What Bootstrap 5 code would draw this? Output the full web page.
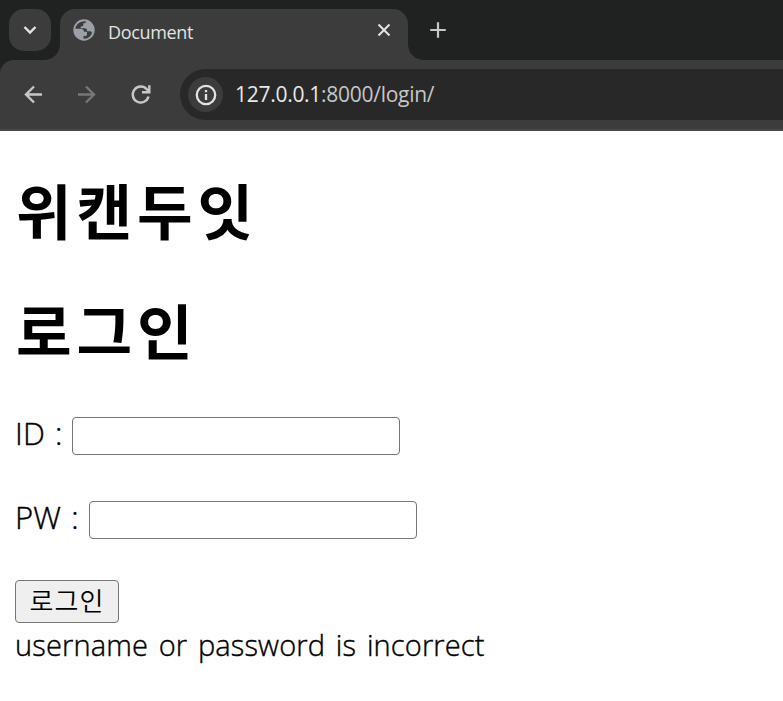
<!DOCTYPE html>
<html lang="ko">
<head>
<meta charset="utf-8">
<meta name="viewport" content="width=device-width, initial-scale=1">
<title>Document</title>
<link href="https://cdn.jsdelivr.net/npm/bootstrap@5.3.0/dist/css/bootstrap.min.css" rel="stylesheet">
<style>
body{font-family:"Open Sans","Noto Sans CJK KR",sans-serif;color:#000;background:#fff;overflow:hidden}
svg{display:block;flex:none}
.tab-strip{height:60px;background:#202221;padding:9px 0 0 9px}
.tab-search{width:42px;height:42px;border-radius:15px;background:#3c3c3c}
.active-tab{width:348px;height:51px;margin-left:9px;background:#3c3c3c;border-radius:15px 15px 0 0;padding:0 17px 9px 13px;color:#e3e3e3}
.active-tab::before,.active-tab::after{content:"";position:absolute;bottom:0;width:15px;height:15px}
.active-tab::before{left:-15px;background:radial-gradient(circle at 0 0,transparent 14.5px,#3c3c3c 15px)}
.active-tab::after{right:-15px;background:radial-gradient(circle at 100% 0,transparent 14.5px,#3c3c3c 15px)}
.tab-title{font-size:18px;line-height:24px;margin:3px 0 0 13px;letter-spacing:-.35px}
.new-tab{margin:8px 0 0 22px}
.toolbar-wrap{background:#202221}
.toolbar{height:71px;background:#3c3c3c;border-radius:14px 0 0 0;border-bottom:2px solid #484848;padding:9px 0 9px 19px}
.nav-icons{gap:26px}
.address{height:51px;background:#282828;border-radius:26px 0 0 26px;padding-left:8px;margin-left:25px}
.site-info{width:35px;height:35px;background:#3c3c3c}
.url{font-size:21px;color:#c7c7c7;margin:0 0 1px 12px;line-height:30px;letter-spacing:-.28px}
.url span{color:#e8e8e8}
.page{padding:41px 15px 0}
.page h1{font-size:60.5px;line-height:80px;font-weight:700;letter-spacing:4.8px;margin:0 0 40px 1px}
.field{font-size:31px;line-height:40px;height:38px;font-weight:300;-webkit-text-stroke:.4px #000}
.field label{margin-top:-6px;word-spacing:2px;letter-spacing:.1px}
.field input{width:328px;height:38px;border:1px solid #767676;border-radius:4px;background:#fff;margin-left:9px}
.pw-row input{margin-left:10px}
.id-row{margin-top:45px}
.pw-row{margin-top:46px}
.login-btn{width:104px;height:43px;border:1px solid #767676;border-radius:4px;background:#efefef;font-size:26px;line-height:41px;color:#000;margin-top:41px;letter-spacing:1px;font-weight:350}
.message{font-size:29px;line-height:40px;margin-top:2px;font-weight:300;word-spacing:3px;letter-spacing:.14px;-webkit-text-stroke:.4px #000}
</style>
<script src="https://cdn.jsdelivr.net/npm/bootstrap@5.3.0/dist/js/bootstrap.bundle.min.js"></script>
</head>
<body>
<header>
<div class="tab-strip d-flex">
<div class="tab-search d-flex align-items-center justify-content-center"><svg width="14" height="10" viewBox="0 0 14 10" fill="none" stroke="#e3e3e3" stroke-width="2.4"><path d="M1.5 2 7 7.5 12.5 2"/></svg></div>
<div class="active-tab d-flex align-items-center position-relative">
<svg width="22" height="22" viewBox="0 0 22 22"><circle cx="11" cy="11" r="9.700" fill="none" stroke="#9aa0a6" stroke-width="2"/><path fill="#9aa0a6" d="M1.500 9.700H7.500C9.500 9.700 11 10.800 11 12.800H14V15.500C14 16.400 13.300 17 12.400 17H10.500V20.500C4 20.500 .5 15.500 1.500 9.700zM13 1.500C13.600 3.500 12.500 4.300 10.300 4.300V6.200C10.300 7 9.700 7.400 9 7.400H7.700V9.200H11.500C13.300 9.200 14.200 10 14.200 12.200H17C18.500 12.200 19.200 13.500 19.300 15.500C22.500 9.500 19.500 2.800 13 1.500z"/></svg>
<span class="tab-title me-auto">Document</span>
<svg width="14" height="14" viewBox="0 0 14 14" stroke="#e3e3e3" stroke-width="2"><path d="M1.500 1.500 12.500 12.500M12.500 1.500 1.500 12.500"/></svg>
</div>
<svg class="new-tab" width="16" height="28" viewBox="0 0 16 28" stroke="#c7c7c7" stroke-width="2.200"><path d="M8 5.200v15.600M.2 13h15.600"/></svg>
</div>
<div class="toolbar-wrap"><div class="toolbar d-flex align-items-center">
<div class="nav-icons d-flex">
<svg width="28" height="28" viewBox="0 0 28 28" fill="none" stroke="#c7c7c7" stroke-width="2.400"><path d="M23 13.500H7M15 5.500 7 13.500 15 21.500"/></svg>
<svg width="28" height="28" viewBox="0 0 28 28" fill="none" stroke="#777" stroke-width="2.400"><path d="M5 13.500H21M13 5.500 21 13.500 13 21.500"/></svg>
<svg width="28" height="28" viewBox="0 0 28 28" fill="none" stroke="#c7c7c7" stroke-width="2.400"><path d="M21.500 15.500A8 8 0 1 1 19.800 8.300L22 10.700M22.300 4.300V11.300H15"/></svg>
</div>
<div class="address d-flex align-items-center flex-grow-1">
<div class="site-info rounded-circle d-flex align-items-center justify-content-center"><svg width="22" height="22" viewBox="0 0 22 22" fill="none" stroke="#e3e3e3" stroke-width="2.300"><circle cx="11" cy="11" r="9.200"/><path d="M11 10v6M11 6v2.300"/></svg></div>
<div class="url"><span>127.0.0.1</span>:8000/login/</div>
</div>
</div></div>
</header>
<main class="page">
<h1>위캔두잇</h1>
<h1>로그인</h1>
<form>
<div class="field id-row d-flex align-items-center"><label for="uid">ID :</label><input id="uid" type="text"></div>
<div class="field pw-row d-flex align-items-center"><label for="pw">PW :</label><input id="pw" type="password"></div>
<button type="button" class="login-btn d-block p-0">로그인</button>
</form>
<div class="message">username or password is incorrect</div>
</main>
</body>
</html>
